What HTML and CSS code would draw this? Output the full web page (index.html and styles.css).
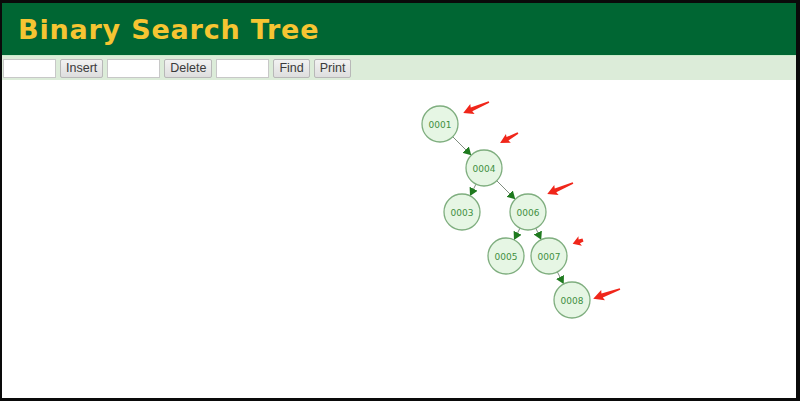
FILE: index.html
```html
<!DOCTYPE html>
<html>
<head>
<meta charset="utf-8">
<link rel="stylesheet" href="styles.css">
</head>
<body>
<div class="page">
  <header class="header">
    <h1 class="title">Binary Search Tree</h1>
  </header>
  <div class="toolbar">
    <input class="field" type="text">
    <button class="btn">Insert</button>
    <input class="field" type="text">
    <button class="btn">Delete</button>
    <input class="field" type="text">
    <button class="btn">Find</button>
    <button class="btn">Print</button>
  </div>
  <div class="canvas">
    <svg class="tree" width="794" height="318" viewBox="0 0 794 318">
      <defs>
        <marker id="ah" markerUnits="userSpaceOnUse" markerWidth="9" markerHeight="9" refX="8" refY="4.5" orient="auto">
          <path d="M0,0 L8,4.5 L0,9 z" class="ahead"/>
        </marker>
      </defs>
      <g class="edges">
        <line x1="450.7" y1="56.7" x2="469.3" y2="75.3" marker-end="url(#ah)"/>
        <line x1="474" y1="104.1" x2="468" y2="115.9" marker-end="url(#ah)"/>
        <line x1="494.7" y1="100.7" x2="513.3" y2="119.3" marker-end="url(#ah)"/>
        <line x1="518" y1="148.1" x2="512" y2="159.9" marker-end="url(#ah)"/>
        <line x1="533.8" y1="148.2" x2="539.2" y2="159.8" marker-end="url(#ah)"/>
        <line x1="555.3" y1="191.9" x2="561.7" y2="204.1" marker-end="url(#ah)"/>
      </g>
      <g class="nodes">
        <circle cx="438" cy="44" r="18"/><text x="438" y="47.5">0001</text>
        <circle cx="482" cy="88" r="18"/><text x="482" y="91.5">0004</text>
        <circle cx="460" cy="132" r="18"/><text x="460" y="135.5">0003</text>
        <circle cx="526" cy="132" r="18"/><text x="526" y="135.5">0006</text>
        <circle cx="504" cy="176" r="18"/><text x="504" y="179.5">0005</text>
        <circle cx="547" cy="176" r="18"/><text x="547" y="179.5">0007</text>
        <circle cx="570" cy="220" r="18"/><text x="570" y="223.5">0008</text>
      </g>
      <g class="marks">
        <polygon transform="translate(487 22) rotate(157)" points="0,-0.8 19,-2 18,-5.5 28,0 18,5.5 19,2 0,0.8"/>
        <polygon transform="translate(516 53) rotate(151)" points="0,-0.8 12,-2 11,-5 20.5,0 11,5 12,2 0,0.8"/>
        <polygon transform="translate(571 103) rotate(157)" points="0,-0.8 19,-2 18,-5.5 28,0 18,5.5 19,2 0,0.8"/>
        <polygon transform="translate(581 160) rotate(160)" points="0,-1.5 4,-2 3,-5 11,0 3,5 4,2 0,1.5"/>
        <polygon transform="translate(618 209) rotate(160)" points="0,-0.8 19,-2 18,-5.5 28.5,0 18,5.5 19,2 0,0.8"/>
      </g>
    </svg>
  </div>
</div>
</body>
</html>
```

FILE: styles.css
```css
html, body {
  margin: 0;
  padding: 0;
  background: #0a0a0a;
}
.page {
  margin: 3px 4px 3px 2px;
  height: 395px;
  background: #ffffff;
  display: flex;
  flex-direction: column;
  overflow: hidden;
}
.header {
  height: 52px;
  background: #006633;
  display: flex;
  align-items: center;
  padding-left: 16px;
}
.title {
  margin: 0;
  font-family: "DejaVu Sans", Verdana, sans-serif;
  font-weight: bold;
  font-size: 27px;
  letter-spacing: 0.8px;
  color: #f6c532;
  line-height: 1;
}
.toolbar {
  height: 24px;
  background: #dcecd9;
  border-top: 1px solid #c9eccb;
  display: flex;
  align-items: center;
  gap: 4px;
  padding-left: 1px;
}
.field {
  width: 49px;
  height: 17px;
  margin: 0;
  padding: 0 1px;
  border: 1px solid #c8c8c8;
  background: #ffffff;
  box-sizing: content-box;
}
.btn {
  height: 19px;
  margin: 0;
  padding: 0 5px;
  border: 1px solid #b8b8b8;
  border-radius: 2px;
  background: linear-gradient(#f2f2f2, #dedede);
  font-family: "Liberation Sans", Arial, sans-serif;
  font-size: 12.5px;
  color: #3a3a3a;
  line-height: 17px;
}
.canvas {
  flex: 1;
  display: flex;
}
.tree {
  display: block;
}
.edges line {
  stroke: #7f8c7f;
  stroke-width: 1;
}
.ahead {
  fill: #1f7a1f;
}
.nodes circle {
  fill: #e6f6e4;
  stroke: #7fae7f;
  stroke-width: 1.3;
}
.nodes text {
  font-family: "DejaVu Sans", Verdana, sans-serif;
  font-size: 9px;
  fill: #3f8f3f;
  text-anchor: middle;
}
.marks polygon {
  fill: #f0261a;
}
```
